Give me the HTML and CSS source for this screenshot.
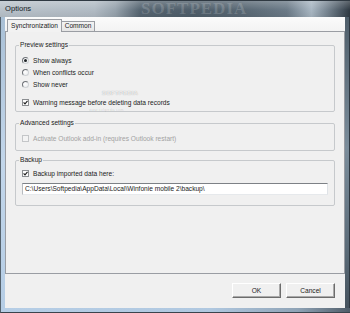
FILE: index.html
```html
<!DOCTYPE html>
<html>
<head>
<meta charset="utf-8">
<link rel="stylesheet" href="styles.css">
</head>
<body>
<div class="window">
  <div class="titlebar">
    <span class="title">Options</span>
    <span class="wm-title">SOFTPEDIA</span>
  </div>
  <div class="middle">
    <div class="frame-left"></div>
    <div class="client">
      <div class="tabs">
        <div class="tab active">Synchronization</div>
        <div class="tab">Common</div>
      </div>
      <div class="panel">
        <fieldset class="group preview">
          <legend>Preview settings</legend>
          <div class="row"><span class="radio on"></span>Show always</div>
          <div class="row"><span class="radio"></span>When conflicts occur</div>
          <div class="row"><span class="radio"></span>Show never</div>
          <div class="row spaced"><span class="check"><svg viewBox="0 0 5 5" width="5" height="5"><path d="M0.6 2.4 L2 3.9 L4.5 0.9" fill="none" stroke="#1e1e1e" stroke-width="1.1"/></svg></span>Warning message before deleting data records</div>
        </fieldset>
        <fieldset class="group advanced">
          <legend>Advanced settings</legend>
          <div class="row disabled"><span class="check off"></span>Activate Outlook add-in (requires Outlook restart)</div>
        </fieldset>
        <fieldset class="group backup">
          <legend>Backup</legend>
          <div class="row"><span class="check"><svg viewBox="0 0 5 5" width="5" height="5"><path d="M0.6 2.4 L2 3.9 L4.5 0.9" fill="none" stroke="#1e1e1e" stroke-width="1.1"/></svg></span>Backup imported data here:</div>
          <div class="path">C:\Users\Softpedia\AppData\Local\Winfonie mobile 2\backup\</div>
        </fieldset>
        <span class="wm-big">SOFTPEDIA</span>
        <span class="wm-small">www.softpedia.com</span>
      </div>
      <div class="buttons">
        <button class="btn">OK</button>
        <button class="btn">Cancel</button>
      </div>
    </div>
    <div class="frame-right"></div>
  </div>
  <div class="frame-bottom"></div>
</div>
</body>
</html>
```
FILE: styles.css
```css
* { box-sizing: border-box; }
html, body { margin: 0; padding: 0; }
body {
  width: 350px;
  height: 313px;
  overflow: hidden;
  font-family: "Liberation Sans", Arial, sans-serif;
  font-size: 6.6px;
  color: #1b1b1b;
  background: #f0f0f0;
}
.window {
  width: 350px;
  height: 313px;
  display: flex;
  flex-direction: column;
}
.titlebar {
  height: 17px;
  flex: none;
  position: relative;
  display: flex;
  align-items: center;
  padding-left: 5px;
  overflow: hidden;
  border-top: 1px solid #2f3942;
  background:
    linear-gradient(180deg, rgba(255,255,255,0.22), rgba(255,255,255,0) 55%, rgba(0,0,0,0.06)),
    linear-gradient(90deg, #b9c2ca 0%, #b1bbc4 27%, #97a3ad 33%, #566571 40%, #4f5e6a 55%, #5a6975 70%, #6c7b88 82%, #a9b7c3 89%, #7d8b97 93%, #45515c 98%, #2f3942 100%);
}
.title {
  position: relative;
  z-index: 1;
  font-size: 7.6px;
  color: #141a1f;
  line-height: 10px;
}
.wm-title {
  position: absolute;
  left: 141px;
  top: -2px;
  font-family: "Liberation Serif", serif;
  font-weight: bold;
  font-size: 17px;
  letter-spacing: 1px;
  color: rgba(255,255,255,0.16);
}
.middle {
  flex: 1;
  display: flex;
  min-height: 0;
}
.frame-left {
  width: 5px;
  flex: none;
  border-left: 1px solid #56636e;
  background: linear-gradient(180deg, #a9c0d6, #c2d6ea 50%, #b5cde5);
}
.frame-right {
  width: 5px;
  flex: none;
  border-right: 1px solid #2e3740;
  background: linear-gradient(180deg, #4f5e6a, #7b8d9b 45%, #5b6b78 80%, #45525d);
}
.frame-bottom {
  height: 5px;
  flex: none;
  border-bottom: 1px solid #3a444d;
  border-left: 1px solid #56636e;
  background: linear-gradient(90deg, #b6cee6, #b0c8e0 60%, #8fa3b6 85%, #4f5c68);
}
.client {
  flex: 1;
  display: flex;
  flex-direction: column;
  background: #f0f0f0;
  min-width: 0;
}
.tabs {
  height: 14px;
  flex: none;
  display: flex;
  align-items: flex-end;
  padding-left: 2px;
  background: linear-gradient(180deg, #fbfbfb, #f3f3f3);
}
.tab {
  border: 1px solid #9a9da3;
  border-bottom: none;
  line-height: 8px;
  text-align: center;
  white-space: nowrap;
}
.tab.active {
  width: 55px;
  height: 13px;
  padding-top: 2px;
  margin-bottom: -1px;
  position: relative;
  z-index: 1;
  background: #f2f2f2;
}
.tab:not(.active) {
  width: 33px;
  height: 10px;
  margin-left: 0;
  border-left: none;
  background: linear-gradient(180deg, #f3f3f3, #e6e6e6);
}
.panel {
  flex: none;
  height: 243px;
  position: relative;
  border: 1px solid #9a9da3;
  padding: 9px 9px 0 9px;
  background: #f0f0f0;
}
.group {
  margin: 0;
  padding: 0 6px;
  min-width: 0;
  border: 1px solid #c6c9cc;
  border-radius: 2px;
}
.group legend {
  padding: 0 1px;
  margin-left: -3px;
  line-height: 8px;
}
.preview { padding-top: 5px; padding-bottom: 3px; }
.advanced { margin-top: 7px; padding-top: 5px; padding-bottom: 6px; }
.backup { margin-top: 5px; padding-top: 3px; padding-bottom: 10px; }
.row {
  display: flex;
  align-items: center;
  gap: 4px;
  height: 12px;
  white-space: nowrap;
}
.row.spaced { margin-top: 6px; }
.row.disabled { color: #a2a2a2; }
.radio {
  width: 7px;
  height: 7px;
  flex: none;
  position: relative;
  border-radius: 50%;
  border: 1px solid;
  border-color: #6f7378 #cfd2d5 #cfd2d5 #6f7378;
  background: radial-gradient(circle at 40% 40%, #ffffff, #e6e8ea);
}
.radio.on::after {
  content: "";
  position: absolute;
  left: 1px;
  top: 1px;
  width: 3px;
  height: 3px;
  border-radius: 50%;
  background: #1f2326;
}
.check {
  width: 7px;
  height: 7px;
  flex: none;
  display: flex;
  align-items: center;
  justify-content: center;
  border: 1px solid #8b8e91;
  background: #fdfdfd;
}
.check.off {
  border-color: #c4c6c8;
  background: #f3f3f3;
}
.path {
  margin-top: 4px;
  height: 12px;
  border: 1px solid;
  border-color: #7d8186 #dfe3e7 #e6e9ec #b7bbbf;
  background: #ffffff;
  padding: 0 2px;
  line-height: 10px;
  white-space: nowrap;
  overflow: hidden;
}
.wm-big {
  position: absolute;
  left: 96px;
  top: 58px;
  line-height: 7px;
  font-size: 6px;
  font-weight: bold;
  letter-spacing: 0.2px;
  color: rgba(255,255,255,0.8);
  text-shadow: 0 0 1px rgba(0,0,0,0.35);
  pointer-events: none;
}
.wm-small {
  position: absolute;
  left: 83px;
  top: 76px;
  line-height: 4px;
  font-size: 4px;
  color: rgba(0,0,0,0.15);
  pointer-events: none;
}
.buttons {
  flex: 1;
  display: flex;
  justify-content: flex-end;
  align-items: flex-start;
  gap: 5px;
  padding: 9px 10px 0 0;
}
.btn {
  width: 49px;
  height: 15px;
  padding: 0;
  font-family: "Liberation Sans", Arial, sans-serif;
  font-size: 6.6px;
  color: #1b1b1b;
  background: #f0f0f0;
  border: 1px solid;
  border-color: #ffffff #6c6c6c #6c6c6c #ffffff;
  box-shadow: inset -1px -1px 0 #a9a9a9;
}
```
